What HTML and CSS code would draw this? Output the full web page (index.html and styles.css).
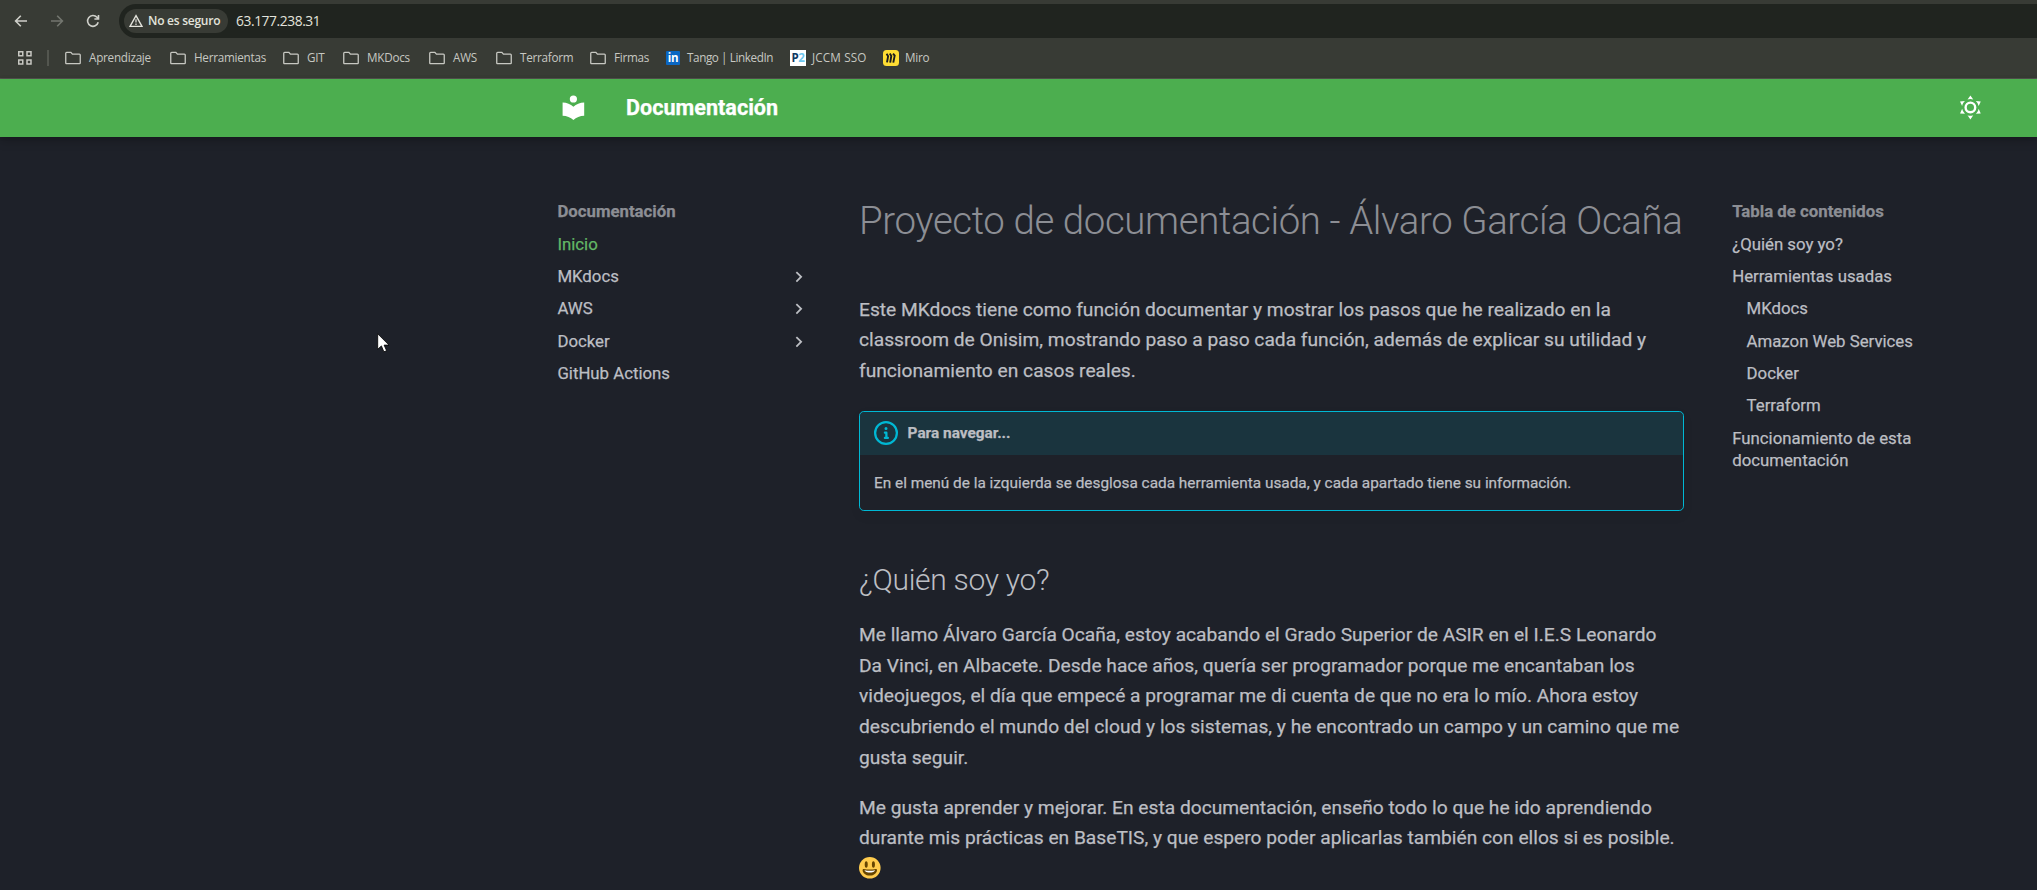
FILE: index.html
```html
<!DOCTYPE html>
<html lang="es">
<head>
<meta charset="utf-8">
<title>Documentación</title>
<link rel="stylesheet" href="styles.css">
</head>
<body>
<svg class="defs" aria-hidden="true">
  <symbol id="folder" viewBox="0 0 16 16"><path d="M.75 13V3.2c0-.5.4-.9.9-.9h4.2l1.6 1.9h6.9c.5 0 .9.4.9.9V13c0 .4-.3.7-.7.7H1.5a.7.7 0 0 1-.75-.7Z" fill="none" stroke="currentColor" stroke-width="1.3"/></symbol>
  <symbol id="chevron" viewBox="0 0 24 24"><path d="M8.59 16.58 13.17 12 8.59 7.41 10 6l6 6-6 6z" fill="currentColor"/></symbol>
</svg>

<div class="browser">
  <div class="toolbar">
    <svg class="tool" viewBox="0 0 16 16"><path d="M14 8H2.8M7.8 2.8 2.6 8l5.2 5.2"/></svg>
    <svg class="tool tool-off" viewBox="0 0 16 16"><path d="M2 8h11.2M8.2 2.8 13.4 8l-5.2 5.2"/></svg>
    <svg class="tool" viewBox="0 0 16 16"><path d="M13.2 9.3A5.4 5.4 0 1 1 12 4.3l1.2 1.3M13.5 2v4H9.4"/></svg>
    <div class="omnibox">
      <div class="chip">
        <svg class="warning" viewBox="0 0 14 14"><path d="M7 1.6 13 12.4H1Z" fill="none" stroke="currentColor" stroke-width="1.4"/><path d="M7 5.2v3.4M7 9.6v1.4" stroke="currentColor" stroke-width="1.2"/></svg>
        <span class="chip-text">No es seguro</span>
      </div>
      <span class="url">63.177.238.31</span>
    </div>
  </div>
  <div class="bookmarks">
    <svg class="apps" viewBox="0 0 14 14"><path d="M.75.75h4v4h-4zM9 .75h4v4H9zM.75 9h4v4h-4zM9 9h4v4H9z" fill="none" stroke="currentColor" stroke-width="1.5"/></svg>
    <i class="divider"></i>
    <span class="mark"><svg><use href="#folder"/></svg><span>Aprendizaje</span></span>
    <span class="mark"><svg><use href="#folder"/></svg><span>Herramientas</span></span>
    <span class="mark"><svg><use href="#folder"/></svg><span>GIT</span></span>
    <span class="mark"><svg><use href="#folder"/></svg><span>MKDocs</span></span>
    <span class="mark"><svg><use href="#folder"/></svg><span>AWS</span></span>
    <span class="mark"><svg><use href="#folder"/></svg><span>Terraform</span></span>
    <span class="mark"><svg><use href="#folder"/></svg><span>Firmas</span></span>
    <span class="mark mark-site"><b class="fav linkedin">in</b><span>Tango | LinkedIn</span></span>
    <span class="mark mark-site mark-wide"><b class="fav jccm">P<em>2</em></b><span>JCCM SSO</span></span>
    <span class="mark mark-site"><svg viewBox="0 0 16 16"><rect width="16" height="16" rx="3.5" fill="#ffdd33"/><path d="M3.600 3.800l1.500 2.500L4 12.400M6.800 3.600l1.500 2.400L7.200 12.600M10 3.600l1.700 2L10.300 12.600" fill="none" stroke="#1c1c1e" stroke-width="1.900"/></svg><span>Miro</span></span>
  </div>
</div>

<header class="header">
  <svg class="header-icon" viewBox="0 0 24 24"><path d="M12 8a3 3 0 0 0 3-3 3 3 0 0 0-3-3 3 3 0 0 0-3 3 3 3 0 0 0 3 3m0 3.54C9.64 9.35 6.5 8 3 8v11c3.5 0 6.64 1.35 9 3.54 2.36-2.19 5.5-3.54 9-3.54V8c-3.5 0-6.64 1.35-9 3.54"/></svg>
  <span class="header-title">Documentación</span>
  <svg class="header-icon" viewBox="0 0 24 24"><path d="M12 7a5 5 0 0 1 5 5 5 5 0 0 1-5 5 5 5 0 0 1-5-5 5 5 0 0 1 5-5m0 2a3 3 0 0 0-3 3 3 3 0 0 0 3 3 3 3 0 0 0 3-3 3 3 0 0 0-3-3m0-7 2.39 3.42C13.65 5.15 12.84 5 12 5s-1.65.15-2.39.42zM3.34 7l4.16-.35A7.2 7.2 0 0 0 5.94 8.5c-.44.74-.69 1.5-.83 2.29zm.02 10 1.76-3.77a7.13 7.13 0 0 0 2.38 4.14zM20.65 7l-1.77 3.79a7.02 7.02 0 0 0-2.38-4.15zm-.01 10-4.14.36c.59-.51 1.12-1.14 1.54-1.86.42-.73.69-1.5.83-2.29zM12 22l-2.41-3.44c.74.27 1.55.44 2.41.44.82 0 1.63-.17 2.37-.44z"/></svg>
</header>

<main class="main">
  <nav class="nav">
    <div class="nav-title">Documentación</div>
    <a class="nav-link active">Inicio</a>
    <a class="nav-link">MKdocs<svg><use href="#chevron"/></svg></a>
    <a class="nav-link">AWS<svg><use href="#chevron"/></svg></a>
    <a class="nav-link">Docker<svg><use href="#chevron"/></svg></a>
    <a class="nav-link">GitHub Actions</a>
  </nav>

  <article class="article">
    <h1>Proyecto de documentación - Álvaro García Ocaña</h1>
    <p>Este MKdocs tiene como función documentar y mostrar los pasos que he realizado en la classroom de Onisim, mostrando paso a paso cada función, además de explicar su utilidad y funcionamiento en casos reales.</p>
    <div class="admonition">
      <div class="admonition-title">
        <svg viewBox="0 0 16 16"><path d="M0 8a8 8 0 1 1 16 0A8 8 0 0 1 0 8m8-6.5a6.5 6.5 0 1 0 0 13 6.5 6.5 0 0 0 0-13M6.5 7.75A.75.75 0 0 1 7.25 7h1a.75.75 0 0 1 .75.75v2.75h.25a.75.75 0 0 1 0 1.5h-2a.75.75 0 0 1 0-1.5h.25v-2h-.25a.75.75 0 0 1-.75-.75M8 6a1 1 0 1 1 0-2 1 1 0 0 1 0 2"/></svg>
        <span>Para navegar...</span>
      </div>
      <p>En el menú de la izquierda se desglosa cada herramienta usada, y cada apartado tiene su información.</p>
    </div>
    <h2>¿Quién soy yo?</h2>
    <p>Me llamo Álvaro García Ocaña, estoy acabando el Grado Superior de ASIR en el I.E.S Leonardo Da&nbsp;Vinci, en Albacete. Desde hace años, quería ser programador porque me encantaban los videojuegos, el día que empecé a programar me di cuenta de que no era lo mío. Ahora estoy descubriendo el mundo del cloud y los sistemas, y he encontrado un campo y un camino que me gusta seguir.</p>
    <p>Me gusta aprender y mejorar. En esta documentación, enseño todo lo que he ido aprendiendo durante mis prácticas en BaseTIS, y que espero poder aplicarlas también con ellos si es posible. <svg class="emoji" viewBox="0 0 36 36"><circle cx="18" cy="18" r="18" fill="#ffcc4d"/><path d="M18 21c-4 0-6.600-.5-10-1-.8-.2-2 0-2 2 0 4 4.600 9 12 9s12-5 12-9c0-2-1.200-2.200-2-2-3.400.5-6 1-10 1" fill="#664500"/><path d="M9 22s3 1 9 1 9-1 9-1-2 4-9 4-9-4-9-4" fill="#fff"/><ellipse cx="12" cy="12.500" rx="2.500" ry="5.500" fill="#664500"/><ellipse cx="24" cy="12.500" rx="2.500" ry="5.500" fill="#664500"/></svg></p>
  </article>

  <nav class="toc">
    <div class="nav-title">Tabla de contenidos</div>
    <a class="nav-link">¿Quién soy yo?</a>
    <a class="nav-link">Herramientas usadas</a>
    <a class="nav-link nested">MKdocs</a>
    <a class="nav-link nested">Amazon Web Services</a>
    <a class="nav-link nested">Docker</a>
    <a class="nav-link nested">Terraform</a>
    <a class="nav-link">Funcionamiento de esta documentación</a>
  </nav>
</main>

<svg class="pointer" viewBox="0 0 13 20"><path d="M.7.8v15.500l3.700-3.400 2.500 5.900 2.700-1.100-2.500-5.600h4.900z" fill="#fff" stroke="#000" stroke-width=".8"/></svg>
</body>
</html>
```
FILE: styles.css
```css
* { box-sizing: border-box; }
html { font-size: 24px; }
body {
  margin: 0;
  width: 2037px;
  height: 890px;
  overflow: hidden;
  position: relative;
  display: flex;
  flex-direction: column;
  background: #1e2129;
  color: #bcbec3;
  font-family: Roboto, "Liberation Sans", sans-serif;
}
.defs { position: absolute; width: 0; height: 0; }

/* Browser chrome */
.browser {
  flex: none;
  height: 79px;
  background: #383b35;
  border-bottom: 1px solid #53534f;
  color: #c7c8c2;
  font-family: "Open Sans", "Noto Sans", sans-serif;
  font-size: 12px;
}
.toolbar {
  display: flex;
  align-items: center;
  height: 42px;
  padding-left: 13px;
}
.tool {
  width: 16px;
  height: 16px;
  margin-right: 20px;
  fill: none;
  stroke: #cfd0ca;
  stroke-width: 1.6;
}
.tool-off { stroke: #73766f; }
.omnibox {
  flex: 1;
  display: flex;
  align-items: center;
  height: 34px;
  margin-left: -2px;
  padding-left: 5px;
  border-radius: 17px 0 0 17px;
  background: #20241f;
}
.chip {
  display: flex;
  align-items: center;
  width: 104px;
  height: 24px;
  padding-left: 5px;
  border-radius: 12px;
  background: #383b35;
  color: #e3e3dc;
}
.warning { width: 14px; height: 14px; margin-right: 5px; }
.chip-text {
  padding-bottom: 1px;
  font-weight: 600;
  letter-spacing: -0.25px;
  white-space: nowrap;
}
.url {
  margin-left: 8px;
  padding-bottom: 1px;
  color: #e3e3dc;
  font-size: 13.8px;
  letter-spacing: -0.42px;
}
.bookmarks {
  display: grid;
  grid-template-columns: 29px 18px 105px 113px 60px 86px 67px 94px 76px 124px 93px 70px;
  align-items: center;
  height: 32px;
  padding-left: 18px;
}
.apps { width: 14px; height: 14px; }
.divider { width: 2px; height: 16px; background: #53564f; }
.mark {
  display: flex;
  align-items: center;
  gap: 8px;
  white-space: nowrap;
  font-size: 11.7px;
  line-height: 15px;
  letter-spacing: -0.25px;
}
.mark span { padding-bottom: 1px; }
.mark svg { width: 16px; height: 16px; }
.mark-site { gap: 6px; }
.mark-site .linkedin + span { margin-left: 1px; letter-spacing: -0.4px; }
.mark-wide { letter-spacing: 0.15px; }
.fav {
  display: flex;
  align-items: center;
  justify-content: center;
  width: 16px;
  height: 16px;
  font-size: 11.5px;
  line-height: 16px;
  letter-spacing: -0.3px;
}
.linkedin {
  width: 14px;
  height: 14px;
  border-radius: 1px;
  background: #0a66c2;
  color: #fff;
}
.jccm { background: #fff; color: #123a63; }
.jccm em { font-style: normal; color: #6dc6ee; }

/* Site header */
.header {
  flex: none;
  display: flex;
  align-items: center;
  height: 57.6px;
  padding: 0 52.6px .6px 558.6px;
  background: #4cae4f;
  color: #fff;
  box-shadow: 0 0 .2rem rgba(0, 0, 0, .1), 0 .2rem .4rem rgba(0, 0, 0, .2);
}
.header-icon { width: 28.8px; height: 28.8px; fill: currentColor; }
.header-title {
  flex: 1;
  margin-left: 38.6px;
  font-size: 21.6px;
  font-weight: 700;
  -webkit-text-stroke: .25px;
}

/* Page columns */
.main {
  display: grid;
  grid-template-columns: 252.6px 825px 210px;
  column-gap: 49px;
  align-items: start;
  padding: 36px 0 0 557.4px;
  -webkit-text-stroke: .25px;
}
.main .toc { margin-left: -.8px; }
.nav, .toc { padding-top: 28.8px; font-size: 16.8px; line-height: 1.3; }
.nav-title { color: #8c8e94; font-weight: 700; }
.nav-link {
  display: flex;
  align-items: center;
  justify-content: space-between;
  margin-top: .625em;
}
.nav-link svg { width: 21.6px; height: 21.6px; }
.nested { padding-left: 14.4px; }
.active { color: #63b866; }

/* Article */
.article {
  padding-top: 24px;
  font-size: 19.2px;
  line-height: 1.6;
}
.article h1 {
  margin: -.6px 0 48.6px;
  color: #8c8e94;
  font-size: 2em;
  font-weight: 300;
  letter-spacing: -.01em;
  line-height: 1.3;
  white-space: nowrap;
  -webkit-text-stroke: 0;
}
.article h2 {
  margin: 1.6em 0 .64em;
  font-size: 1.5625em;
  font-weight: 300;
  letter-spacing: -.01em;
  line-height: 1.4;
  -webkit-text-stroke: 0;
}
.article p { margin: 0 0 1em; }
.admonition {
  margin: 24px 0 0;
  overflow: hidden;
  border: 1px solid #00b8d4;
  border-radius: 4.8px;
  box-shadow: 0 .2rem .5rem rgba(0, 0, 0, .05), 0 0 .05rem rgba(0, 0, 0, .1);
  font-size: 15.36px;
}
.admonition-title {
  display: flex;
  align-items: center;
  gap: 9.6px;
  padding: 0 14px 1px;
  height: 43.8px;
  background: rgba(0, 184, 212, .13);
  font-weight: 700;
}
.admonition-title svg { width: 24px; height: 24px; fill: #00b8d4; }
.admonition p { margin: 15.36px 14px 14.4px; }
.emoji { width: 21.6px; height: 21.6px; vertical-align: text-top; }

/* Mouse pointer drawn over the page */
.pointer {
  position: absolute;
  left: 377px;
  top: 333px;
  width: 13px;
  height: 20px;
}
```
